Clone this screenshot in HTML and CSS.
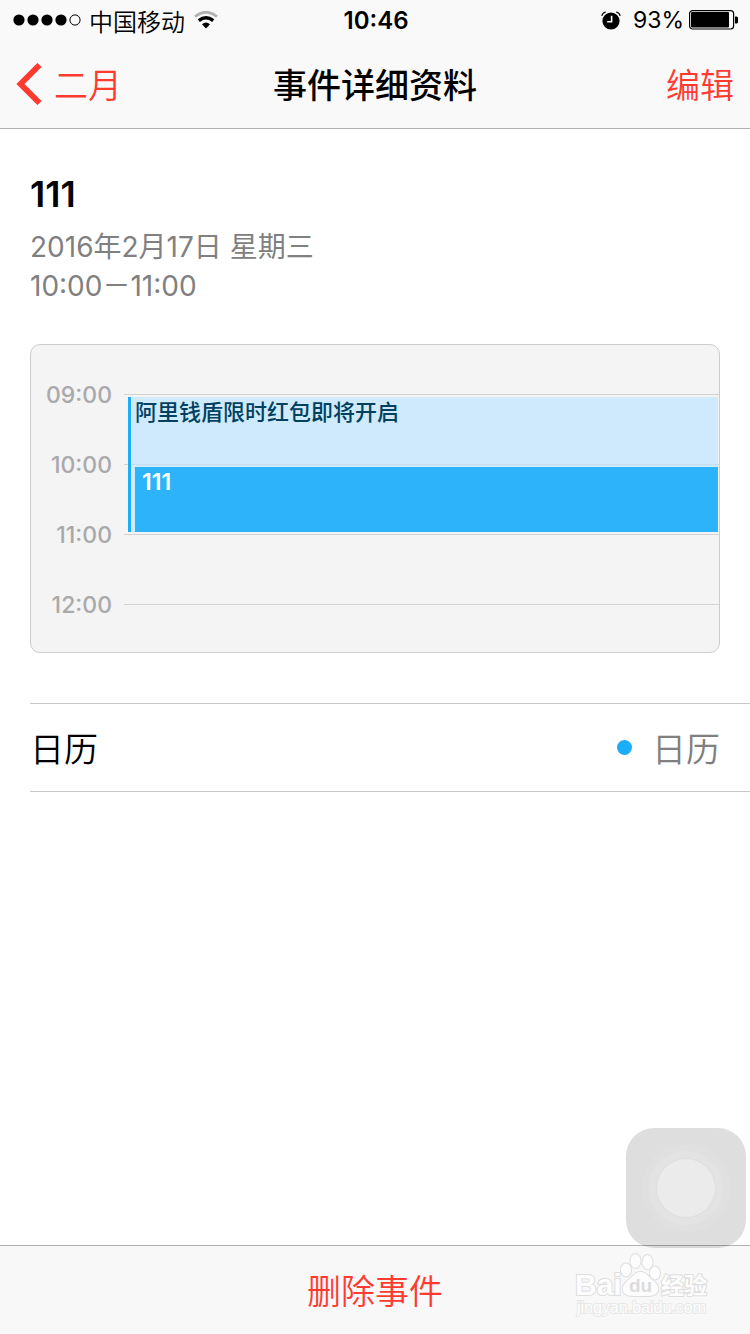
FILE: index.html
```html
<!DOCTYPE html>
<html lang="zh-CN">
<head>
    <meta charset="UTF-8">
    <meta name="viewport" content="width=device-width, initial-scale=1">
    <title>事件详细资料</title>
    <link rel="stylesheet" href="styles.css">
</head>
<body>
<header class="top">
    <div class="status">
        <div class="status-left">
            <svg class="signal" width="68" height="12" viewBox="0 0 68 12">
                <circle cx="6" cy="6" r="5.6"/>
                <circle cx="20" cy="6" r="5.6"/>
                <circle cx="34" cy="6" r="5.6"/>
                <circle cx="48" cy="6" r="5.6"/>
                <circle cx="62" cy="6" r="5.1" fill="none" stroke="#000"/>
            </svg>
            <span class="carrier">中国移动</span>
            <svg class="wifi" width="24" height="18" viewBox="0 0 24 18">
                <path d="M1 5.6Q12-3.2 23 5.6" fill="none" stroke="#b2b2b2" stroke-width="2.8"/>
                <path d="M4.8 9.6Q12 3.8 19.2 9.6" fill="none" stroke="#000" stroke-width="3.4"/>
                <path d="M8 13.2Q12 9.8 16 13.2L12 17.4z"/>
            </svg>
        </div>
        <span class="clock">10:46</span>
        <div class="status-right">
            <svg width="20" height="19" viewBox="0 0 20 19">
                <circle cx="10" cy="10" r="8.6"/>
                <path d="M.8 4.8Q1.4 1.8 4.8 1M19.2 4.8Q18.6 1.8 15.2 1" fill="none" stroke="#000" stroke-width="1.2"/>
                <path d="M10.6 4.8V10.8H6.2" fill="none" stroke="#fff" stroke-width="1.6"/>
            </svg>
            <span class="percent">93%</span>
            <svg class="battery" width="50" height="20" viewBox="0 0 50 20">
                <rect x=".6" y=".6" width="44" height="18.4" rx="3" fill="none" stroke="#000" stroke-width="1.2"/>
                <rect x="2" y="2" width="38" height="15.6" rx="1"/>
                <path d="M46 6.5h1.5q1.5 0 1.5 1.5v4q0 1.5-1.5 1.5H46z"/>
            </svg>
        </div>
    </div>
    <nav class="nav">
        <a href="#" class="back">
            <svg width="27" height="42" viewBox="0 0 27 42"><path d="M23.5 2L4.5 21L23.5 40" fill="none" stroke="#ff3b30" stroke-width="5.8"/></svg>
            <span>二月</span>
        </a>
        <h1>事件详细资料</h1>
        <a href="#" class="edit">编辑</a>
    </nav>
</header>
<main class="main">
    <h2>111</h2>
    <p class="date">2016年2月17日 星期三<br>10:00－11:00</p>
    <section class="day">
        <ul class="hours">
            <li><span>09:00</span></li>
            <li><span>10:00</span></li>
            <li><span>11:00</span></li>
            <li><span>12:00</span></li>
        </ul>
        <div class="event">
            <p>阿里钱盾限时红包即将开启</p>
            <div class="event-cur">111</div>
        </div>
    </section>
    <a href="#" class="row">
        <span>日历</span>
        <span class="value">日历</span>
    </a>
</main>
<footer class="bottom">
    <button type="button" class="delete">删除事件</button>
    <svg class="mark" width="140" height="68" viewBox="0 0 140 68">
        <text x="3" y="45" class="mark-big">Bai</text>
        <g class="mark-shape">
            <ellipse cx="54" cy="20" rx="5" ry="6.5"/>
            <ellipse cx="63.5" cy="11" rx="5" ry="7"/>
            <ellipse cx="75.5" cy="12" rx="5" ry="7"/>
            <ellipse cx="83" cy="23" rx="5" ry="6.5"/>
            <path d="M68.500 22c6 0 8 5 12 8 5 4 7 8 5 12-2 4-7 4-17 4s-15 0-17-4c-2-4 0-8 5-12 4-3 6-8 12-8z"/>
        </g>
        <text x="57" y="42" class="mark-du">du</text>
        <text x="89" y="44" class="mark-cn">经验</text>
        <text x="5" y="63" class="mark-url">jingyan.baidu.com</text>
    </svg>
</footer>
<button type="button" class="touch" aria-label="AssistiveTouch"><i></i></button>
</body>
</html>
```
FILE: styles.css
```css
*{
    box-sizing: border-box;
}
body,h1,h2,p,ul{
    margin: 0;
    padding: 0;
}
body{
    display: flex;
    flex-direction: column;
    min-height: 100vh;
    background: #fff;
    color: #000;
    font-family: Inter, "Noto Sans CJK SC", sans-serif;
    font-size: 34px;
}
a{
    color: inherit;
    text-decoration: none;
}
svg{
    display: block;
    flex: none;
}
button{
    border: 0;
    padding: 0;
    background: none;
    font: inherit;
}
.top{
    background: #f9f9f9;
    border-bottom: 1px solid #b2b2b2;
}
.status,.nav{
    display: grid;
    grid-template-columns: 1fr auto 1fr;
    align-items: center;
}
.status{
    height: 40px;
    padding: 0 11px 0 13px;
    font-size: 24px;
}
.status-left,.status-right{
    display: flex;
    align-items: center;
}
.status-right{
    justify-content: flex-end;
}
.carrier{
    margin: 0 9px 0 8px;
    font-weight: 350;
}
.clock{
    font-weight: 600;
}
.percent{
    margin: 0 5px 0 12px;
    font-size: 23px;
}
.nav{
    height: 88px;
    padding: 0 16px;
    color: #ff3b30;
}
.back{
    display: flex;
    align-items: center;
    gap: 11px;
}
h1{
    color: #000;
    font-size: 34px;
    font-weight: 500;
}
.nav span,h1,.edit{
    padding-bottom: 2px;
}
.edit{
    text-align: right;
}
.nav,.row,.delete{
    font-weight: 350;
}
h1{
    font-weight: 500;
}
.main{
    flex: 1;
    padding: 43px 0 0 30px;
}
h2{
    font-size: 36px;
    font-weight: 600;
    line-height: 44px;
}
.date{
    margin-top: 12px;
    color: #808080;
    font-size: 28px;
    line-height: 39px;
    font-weight: 370;
}
.day{
    position: relative;
    margin: 38px 30px 50px 0;
    padding: 14px 0 13px;
    background: #f4f4f4;
    border: 1px solid #ccc;
    border-radius: 10px;
}
.hours{
    list-style: none;
    color: #a9a9ac;
    font-size: 23px;
    font-weight: 500;
}
.hours li{
    display: flex;
    align-items: center;
    gap: 12px;
    height: 70px;
}
.hours span{
    width: 81px;
    padding-top: 2px;
    text-align: right;
}
.hours li::after{
    content: "";
    flex: 1;
    height: 1px;
    background: #d2d2d2;
}
/* events lie over the hour lines */
.event{
    position: absolute;
    top: 52px;
    left: 97px;
    right: 1px;
    height: 135px;
    padding-left: 4px;
    border-left: 3px solid #1badf8;
    background: rgba(190,230,255,.7);
    color: #00415f;
    font-size: 22px;
    font-weight: 500;
    line-height: 30px;
}
.event p{
    height: 70px;
}
.event-cur{
    height: 65px;
    padding-left: 7px;
    background: #2db3f9;
    color: #fff;
    font-size: 23px;
    font-weight: 600;
}
.row{
    display: flex;
    justify-content: space-between;
    align-items: center;
    height: 89px;
    padding-right: 30px;
    border-top: 1px solid #c8c7cc;
    border-bottom: 1px solid #c8c7cc;
}
.value{
    display: flex;
    align-items: center;
    gap: 20px;
    color: #808080;
}
.value::before{
    content: "";
    width: 15px;
    height: 15px;
    border-radius: 50%;
    background: #1badf8;
}
.bottom{
    position: relative;
    display: flex;
    justify-content: center;
    height: 89px;
    background: #f8f8f8;
    border-top: 1px solid #b2b2b2;
}
.delete{
    padding: 0 16px 2px;
    color: #ff3b30;
}
.mark{
    position: absolute;
    right: 38px;
    bottom: 16px;
}
.mark text,.mark-shape{
    fill: #fdfdfd;
    stroke: #dedede;
    stroke-width: 2px;
    paint-order: stroke;
}
.mark .mark-big{
    font: bold 30px "Liberation Sans", sans-serif;
}
.mark .mark-du{
    font: bold 19px "Liberation Sans", sans-serif;
    fill: #dcdcdc;
    stroke: none;
}
.mark .mark-cn{
    font: bold 23px "Noto Sans CJK SC", sans-serif;
}
.mark .mark-url{
    font: 16px "Liberation Sans", sans-serif;
    stroke: #e8e8e8;
}
/* floating round button */
.touch{
    position: fixed;
    right: 4px;
    bottom: 86px;
    display: grid;
    place-items: center;
    width: 120px;
    height: 120px;
    border-radius: 28px;
    background: rgba(0,0,0,.13);
}
.touch i{
    width: 58px;
    height: 58px;
    border-radius: 50%;
    background: #ebebeb;
    box-shadow: 0 0 0 1px #dedede, 0 0 0 8px #e3e3e3, 0 0 0 15px #e0e0e0;
}
```
